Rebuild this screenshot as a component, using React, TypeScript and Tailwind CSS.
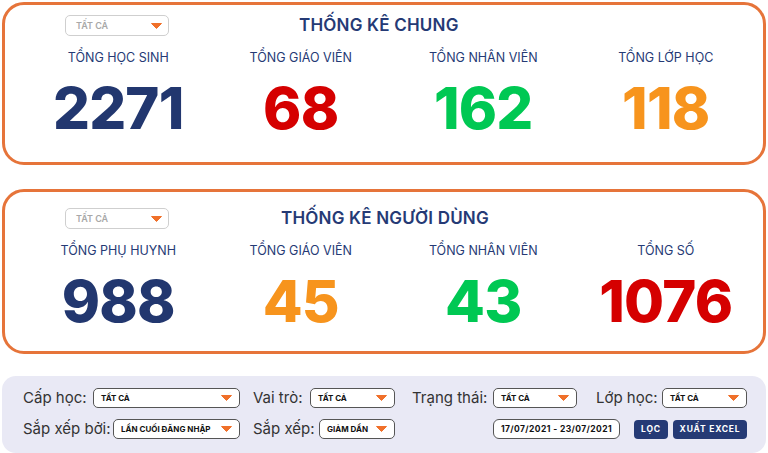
import React from "react";

type Stat = { label: string; value: string; color: string };

const general: Stat[] = [
  { label: "TỔNG HỌC SINH", value: "2271", color: "text-[#22376f]" },
  { label: "TỔNG GIÁO VIÊN", value: "68", color: "text-[#d50000]" },
  { label: "TỔNG NHÂN VIÊN", value: "162", color: "text-[#00c853]" },
  { label: "TỔNG LỚP HỌC", value: "118", color: "text-[#f7941d]" },
];

const users: Stat[] = [
  { label: "TỔNG PHỤ HUYNH", value: "988", color: "text-[#22376f]" },
  { label: "TỔNG GIÁO VIÊN", value: "45", color: "text-[#f7941d]" },
  { label: "TỔNG NHÂN VIÊN", value: "43", color: "text-[#00c853]" },
  { label: "TỔNG SỐ", value: "1076", color: "text-[#d50000]" },
];

function Caret({ className = "" }: { className?: string }) {
  return (
    <svg width="11" height="6" viewBox="0 0 11 6" className={className}>
      <path d="M0.5 0.5 L10.5 0.5 L5.5 5.5 Z" fill="#f0702a" stroke="#f0702a" strokeLinejoin="round" />
    </svg>
  );
}

function CardSelect() {
  return (
    <div className="flex h-[21px] w-[104px] items-center justify-between rounded-[5px] border border-[#cfcfcf] bg-white pl-[10px] pr-[6px]">
      <span className="text-[9px] leading-[10px] font-semibold text-[#a8a8a8]">TẤT CẢ</span>
      <Caret />
    </div>
  );
}

function StatCard({
  title,
  titleGap,
  stats,
  pad,
}: {
  title: string;
  titleGap: string;
  stats: Stat[];
  pad: string;
}) {
  return (
    <div className={`rounded-[22px] border-[3px] border-[#e6743a] bg-white ${pad}`}>
      <div className="flex items-center pl-[60px]">
        <CardSelect />
        <h2 className={`${titleGap} text-[17px] leading-[21px] font-semibold tracking-[0.2px] text-[#253a75]`}>
          {title}
        </h2>
      </div>
      <div className="mt-[14px] grid grid-cols-4 pl-[22px] pr-[6px]">
        {stats.map((s) => (
          <div key={s.label} className="flex flex-col items-center">
            <div className="text-[12.5px] leading-[15px] text-[#253a75]">{s.label}</div>
            <div
              className={`mt-[14px] text-[58px] leading-[59px] font-extrabold tracking-[-0.8px] ${s.color}`}
            >
              {s.value}
            </div>
          </div>
        ))}
      </div>
    </div>
  );
}

function BarSelect({ width, text }: { width: string; text: string }) {
  return (
    <div
      className={`${width} flex h-[20px] items-center justify-between rounded-[5px] border border-[#555] bg-white pl-[7px] pr-[7px]`}
    >
      <span className="text-[8px] leading-[10px] font-bold text-[#111]">{text}</span>
      <Caret />
    </div>
  );
}

export default function App() {
  return (
    <div
      className="flex h-[453px] w-[768px] flex-col bg-white px-[2px] pt-[2px]"
      style={{ fontFamily: "Inter, 'Noto Sans', sans-serif" }}
    >
      <StatCard title="THỐNG KÊ CHUNG" titleGap="ml-[130px]" stats={general} pad="pt-[10px] pb-[24px]" />
      <div className="mt-[24px]">
        <StatCard title="THỐNG KÊ NGƯỜI DÙNG" titleGap="ml-[112px]" stats={users} pad="pt-[16px] pb-[20px]" />
      </div>

      <div className="mt-[22px] flex flex-1 flex-col gap-[9px] rounded-[14px] bg-[#e9e9f5] pl-[21px] pt-[11px] text-[15px] leading-[22px] text-[#333]">
        <div className="flex h-[22px] items-center">
          <span className="w-[70px]">Cấp học:</span>
          <BarSelect width="w-[147px]" text="TẤT CẢ" />
          <span className="ml-[13px] w-[57px]">Vai trò:</span>
          <BarSelect width="w-[85px]" text="TẤT CẢ" />
          <span className="ml-[17px] w-[81px]">Trạng thái:</span>
          <BarSelect width="w-[84px]" text="TẤT CẢ" />
          <span className="ml-[19px] w-[66px]">Lớp học:</span>
          <BarSelect width="w-[85px]" text="TẤT CẢ" />
        </div>
        <div className="flex h-[22px] items-center">
          <span className="w-[90px]">Sắp xếp bởi:</span>
          <BarSelect width="w-[127px]" text="LẦN CUỐI ĐĂNG NHẬP" />
          <span className="ml-[13px] w-[66px]">Sắp xếp:</span>
          <BarSelect width="w-[76px]" text="GIẢM DẦN" />
          <div className="ml-[98px] flex h-[20px] w-[127px] items-center justify-center rounded-[6px] border border-[#555] bg-white text-[8.5px] leading-[10px] font-bold tracking-[0.4px] text-[#111]">
            17/07/2021 - 23/07/2021
          </div>
          <button className="ml-[14px] flex h-[19px] w-[34px] items-center justify-center rounded-[4px] bg-[#253a75] text-[8.5px] leading-[10px] font-bold tracking-[0.8px] text-white">
            LỌC
          </button>
          <button className="ml-[5px] flex h-[19px] w-[74px] items-center justify-center rounded-[4px] bg-[#253a75] text-[8.5px] leading-[10px] font-bold tracking-[0.8px] text-white">
            XUẤT EXCEL
          </button>
        </div>
      </div>
    </div>
  );
}
